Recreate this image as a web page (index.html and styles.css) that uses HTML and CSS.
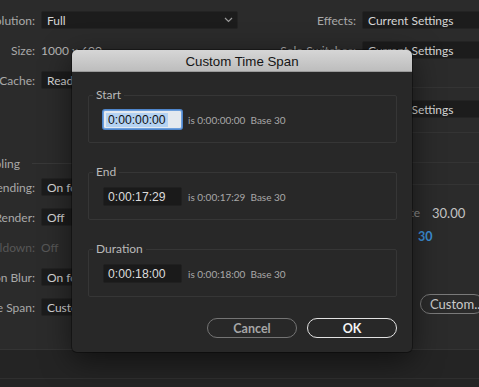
FILE: index.html
```html
<!DOCTYPE html>
<html>
<head>
<meta charset="utf-8">
<link rel="stylesheet" href="styles.css">
</head>
<body>
<div class="app">
  <div class="panes">
    <div class="pane left">
      <div class="row"><span class="lbl">Resolution:</span><div class="box wide"><span>Full</span><svg class="chev" width="9" height="6" viewBox="0 0 9 6"><path d="M1 1 L4.5 4.5 L8 1" fill="none" stroke="#9a9a9a" stroke-width="1.2"/></svg></div></div>
      <div class="row"><span class="lbl">Size:</span><span class="val">1000 x 600</span></div>
      <div class="row"><span class="lbl">Disk Cache:</span><div class="box">Read Only</div></div>
      <div class="gap-a"></div>
      <div class="section-head"><div class="head-wrap"><span class="head">Time Sampling</span></div><span class="rule"></span></div>
      <div class="row"><span class="lbl">Frame Blending:</span><div class="box">On for Checked Layers</div></div>
      <div class="row"><span class="lbl">Field Render:</span><div class="box">Off</div></div>
      <div class="row dim"><span class="lbl">3:2 Pulldown:</span><span class="val">Off</span></div>
      <div class="row"><span class="lbl">Motion Blur:</span><div class="box">On for Checked Layers</div></div>
      <div class="row"><span class="lbl">Time Span:</span><div class="box">Custom</div></div>
    </div>
    <div class="pane right">
      <div class="row"><span class="rlbl">Effects:</span><div class="box rbox">Current Settings</div></div>
      <div class="row"><span class="rlbl">Solo Switches:</span><div class="box rbox">Current Settings</div></div>
      <div class="sep s1"></div>
      <div class="row"><span class="rlbl">Color Depth:</span><div class="box rbox">Current Settings</div></div>
      <div class="sep s2"></div>
      <div class="sep s3"></div>
      <div class="sep s4"></div>
      <div class="rate-row"><span class="rate-lbl">Use comp's frame rate</span><span class="rate-val">30.00</span></div>
      <div class="use-row"><span class="use-lbl">Use this frame rate:</span><span class="blue">30</span></div>
      <div class="custom-row"><button class="pill custom">Custom...</button></div>
    </div>
  </div>
  <div class="footer"><div class="footer-inner"></div></div>
</div>

<div class="dialog">
  <div class="titlebar">Custom Time Span</div>
  <div class="dbody">
    <fieldset class="grp">
      <legend>Start</legend>
      <div class="trow"><div class="tc focus"><span class="sel">0:00:00:00</span></div><span class="info">is 0:00:00:00&nbsp; Base 30</span></div>
    </fieldset>
    <fieldset class="grp">
      <legend>End</legend>
      <div class="trow"><div class="tc">0:00:17:29</div><span class="info">is 0:00:17:29&nbsp; Base 30</span></div>
    </fieldset>
    <fieldset class="grp">
      <legend>Duration</legend>
      <div class="trow"><div class="tc">0:00:18:00</div><span class="info">is 0:00:18:00&nbsp; Base 30</span></div>
    </fieldset>
    <div class="buttons">
      <button class="pill cancel">Cancel</button>
      <button class="pill ok">OK</button>
    </div>
  </div>
</div>
</body>
</html>
```

FILE: styles.css
```css
html, body {
  margin: 0;
  padding: 0;
}
body {
  width: 479px;
  height: 387px;
  overflow: hidden;
  background: #2b2b2b;
  font-family: Lato, "Open Sans", sans-serif;
  font-size: 12px;
  color: #a9a9a9;
  position: relative;
}
.app {
  display: flex;
  flex-direction: column;
  height: 387px;
}
.panes {
  display: flex;
  height: 349px;
  flex: none;
}
.pane {
  display: flex;
  flex-direction: column;
  padding-top: 5px;
}
.left {
  width: 250px;
  flex: none;
}
.right {
  flex: 1;
  min-width: 0;
}
.row {
  height: 30px;
  display: flex;
  align-items: center;
  gap: 6px;
  flex: none;
  white-space: nowrap;
}
.lbl {
  width: 35px;
  display: flex;
  justify-content: flex-end;
  flex: none;
}
.box {
  height: 18px;
  box-sizing: border-box;
  width: 197px;
  background: #1c1c1c;
  border: 1px solid #232323;
  border-radius: 2px;
  color: #d6d6d6;
  padding-left: 5px;
  display: flex;
  align-items: center;
  justify-content: space-between;
  flex: none;
}
.chev {
  margin-right: 4px;
}
.val {
  color: #b4b4b4;
}
.dim .lbl, .dim .val {
  color: #575757;
}
.gap-a {
  height: 60px;
  flex: none;
}
.section-head {
  height: 16px;
  display: flex;
  align-items: center;
  gap: 12px;
  flex: none;
  margin-top: 0;
  margin-bottom: 1px;
  white-space: nowrap;
}
.head-wrap {
  width: 20px;
  display: flex;
  justify-content: flex-end;
  flex: none;
}
.rule {
  flex: 1;
  height: 1px;
  background: #383838;
}
.rlbl {
  width: 106px;
  display: flex;
  justify-content: flex-end;
  flex: none;
}
.rbox {
  width: 160px;
  padding-left: 5px;
}
.sep {
  flex: none;
  border-bottom: 1px solid #343434;
}
.s1 { height: 22px; margin-bottom: 6px; }
.s2 { height: 8px; }
.s3 { height: 29px; }
.s4 { height: 21px; }
.rate-row {
  height: 27px;
  margin-top: 14px;
  display: flex;
  align-items: center;
  white-space: nowrap;
  flex: none;
}
.rate-lbl {
  width: 170px;
  display: flex;
  justify-content: flex-end;
  flex: none;
  color: #8f8f8f;
}
.rate-val {
  margin-left: 12px;
  color: #c4c4c4;
  font-size: 13px;
}
.use-row {
  height: 20px;
  display: flex;
  align-items: center;
  white-space: nowrap;
  flex: none;
}
.use-lbl {
  width: 162px;
  display: flex;
  justify-content: flex-end;
  flex: none;
  color: #8f8f8f;
}
.blue {
  margin-left: 6px;
  color: #3c8fd6;
  font-weight: 700;
  font-size: 12.5px;
}
.custom-row {
  margin-top: 48px;
  padding-left: 170px;
  display: flex;
  flex: none;
}
.pill {
  font-family: Lato, "Open Sans", sans-serif;
  background: transparent;
  border-radius: 10px;
  height: 20px;
  box-sizing: border-box;
  padding: 0;
  display: flex;
  align-items: center;
  justify-content: center;
  font-size: 12.5px;
}
.custom {
  border: 1px solid #7a7a7a;
  color: #cacaca;
  width: 80px;
  justify-content: flex-start;
  padding-left: 9px;
  font-size: 13px;
  font-weight: 400;
}
.footer {
  flex: 1;
  border-top: 1px solid #343434;
  background: #242424;
}
.footer-inner {
  height: 28px;
  border-bottom: 1px solid #2f2f2f;
}

/* dialog */
.dialog {
  position: absolute;
  left: 72px;
  top: 50px;
  width: 340px;
  height: 302px;
  background: #282828;
  border-radius: 5px;
  box-shadow: 0 8px 30px rgba(0,0,0,0.55), 0 0 0 1px rgba(0,0,0,0.35);
  display: flex;
  flex-direction: column;
  overflow: hidden;
}
.titlebar {
  height: 22px;
  flex: none;
  background: linear-gradient(#d6d6d6, #bdbdbd);
  border-bottom: 1px solid #9a9a9a;
  box-sizing: border-box;
  color: #151515;
  font-family: "Liberation Sans", Arial, sans-serif;
  font-size: 13.3px;
  display: flex;
  align-items: center;
  justify-content: center;
  padding-top: 1px;
}
.dbody {
  padding: 16px 15px 0 16px;
  display: flex;
  flex-direction: column;
}
.grp {
  margin: 0;
  border: 1px solid #363636;
  border-radius: 2px;
  padding: 8px 14px 13px 14px;
}
.grp + .grp {
  margin-top: 22px;
}
.grp legend {
  font-family: Lato, "Open Sans", sans-serif;
  font-size: 12px;
  color: #b9b9b9;
  line-height: 14px;
  padding: 0 3px;
  margin-left: -10px;
}
.trow {
  display: flex;
  align-items: center;
  gap: 6px;
}
.tc {
  width: 79px;
  height: 19px;
  box-sizing: border-box;
  background: #1a1a1a;
  border: 1px solid #202020;
  border-radius: 2px;
  color: #dcdcdc;
  font-family: "Liberation Sans", Arial, sans-serif;
  font-size: 12.2px;
  display: flex;
  align-items: center;
  padding-left: 4px;
  flex: none;
}
.tc.focus {
  background: #e4e9ef;
  border: 1px solid #6d9fdc;
  box-shadow: 0 0 0 1px #4f86cc;
  color: #111;
  padding-left: 2px;
}
.sel {
  background: #b4d2f2;
  padding: 0 2px;
}
.info {
  font-size: 10px;
  color: #a8a8a8;
  white-space: nowrap;
}
.buttons {
  display: flex;
  justify-content: flex-end;
  gap: 10px;
  margin-top: 21px;
}
.cancel {
  width: 90px;
  border: 1.5px solid #747474;
  color: #a6a6a6;
  font-weight: 700;
}
.ok {
  width: 90px;
  border: 1.5px solid #e2e2e2;
  color: #f4f4f4;
  font-weight: 700;
}
```
